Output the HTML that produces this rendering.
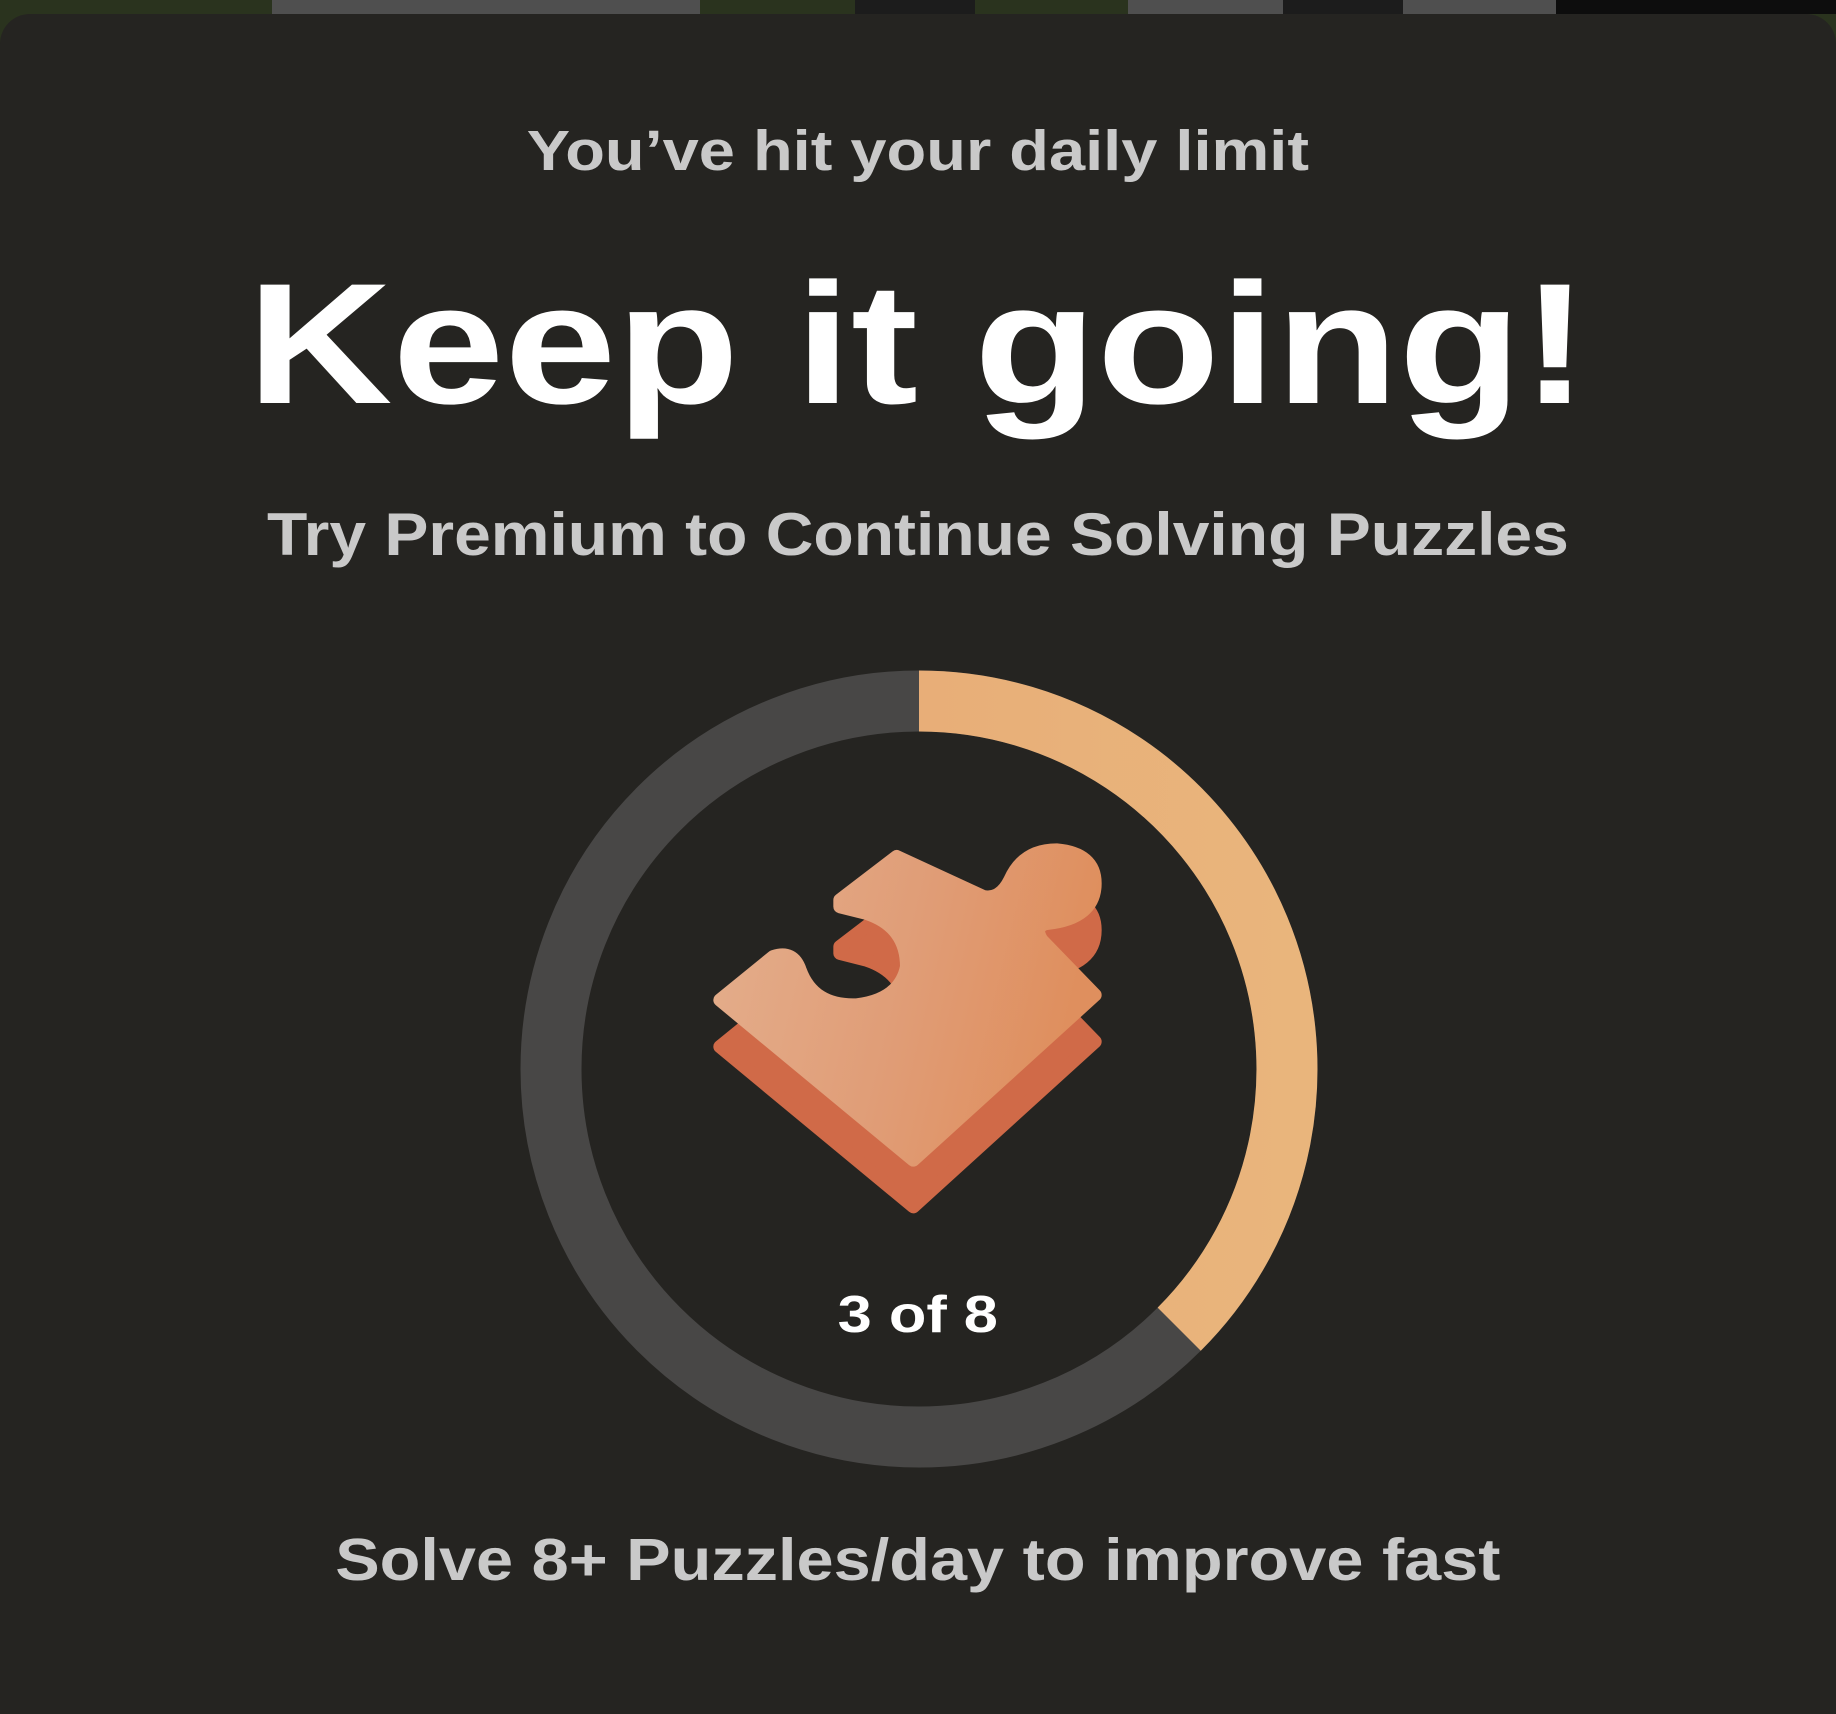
<!DOCTYPE html>
<html><head><meta charset="utf-8"><style>
html,body{margin:0;padding:0;width:1836px;height:1680px;overflow:hidden;background:#2a331e;font-family:"Liberation Sans",sans-serif;}
.strip{position:absolute;top:0;height:14px}
.card{position:absolute;left:0;top:14px;width:1836px;height:1700px;background:#252421;border-radius:30px 30px 0 0}
.t{position:absolute;left:0;width:1836px;text-align:center;font-weight:bold;white-space:nowrap;transform-origin:919px 50%}
</style></head><body>
<div class="strip" style="left:272px;width:428px;background:#4f4f4f"></div>
<div class="strip" style="left:855px;width:120px;background:#1c1c1c"></div>
<div class="strip" style="left:1128px;width:155px;background:#4f4f4f"></div>
<div class="strip" style="left:1283px;width:120px;background:#1c1c1c"></div>
<div class="strip" style="left:1403px;width:153px;background:#4f4f4f"></div>
<div class="strip" style="left:1556px;width:280px;background:#0d0d0d"></div>
<div class="card"></div>
<div class="t" style="top:118px;font-size:57px;color:#c9c9c9;transform:scaleX(1.14)">You’ve hit your daily limit</div>
<div class="t" style="top:245px;font-size:172px;color:#fff;font-weight:900;transform:scaleX(1.17)">Keep it going!</div>
<div class="t" style="top:500px;font-size:60px;color:#c9c9c9;transform:scaleX(1.1)">Try Premium to Continue Solving Puzzles</div>
<svg style="position:absolute;left:0;top:0" width="1836" height="1680">
<defs><linearGradient id="og" x1="0" y1="0" x2="1" y2="0"><stop offset="0" stop-color="#e8ae78"/><stop offset="1" stop-color="#e9b57c"/></linearGradient></defs>
<circle cx="919" cy="1069" r="368" fill="none" stroke="#484746" stroke-width="61"/>
<path d="M919 701 A368 368 0 0 1 1179.2 1329.2" fill="none" stroke="url(#og)" stroke-width="61"/>
</svg>
<svg style="position:absolute;left:680px;top:800px" width="450" height="450" viewBox="0 0 1350 1350">
<defs><linearGradient id="pg" x1="0" y1="0" x2="1" y2="0.2"><stop offset="0" stop-color="#e4ae8c"/><stop offset="0.55" stop-color="#e09d77"/><stop offset="1" stop-color="#df8f5e"/></linearGradient></defs>
<g stroke-linejoin="round" stroke-width="40">
<path transform="translate(0,140)" fill="#d06a48" stroke="#d06a48" d="M120,600 L280,470 Q340,450 360,510 Q400,620 530,615 Q660,600 680,500 Q680,380 560,340 L480,320 L480,300 L650,170 L910,290 Q960,300 990,240 Q1030,150 1130,150 Q1245,160 1245,250 Q1245,355 1100,370 Q1060,380 1085,420 L1245,585 L700,1080 Z"/>
<path fill="url(#pg)" stroke="url(#pg)" d="M120,600 L280,470 Q340,450 360,510 Q400,620 530,615 Q660,600 680,500 Q680,380 560,340 L480,320 L480,300 L650,170 L910,290 Q960,300 990,240 Q1030,150 1130,150 Q1245,160 1245,250 Q1245,355 1100,370 Q1060,380 1085,420 L1245,585 L700,1080 Z"/>
</g>
</svg>
<div class="t" style="top:1285px;font-size:52px;color:#fff;font-weight:900;transform:scaleX(1.18)">3 of 8</div>
<div class="t" style="top:1526px;font-size:59px;color:#c9c9c9;transform:scaleX(1.13)">Solve 8+ Puzzles/day to improve fast</div>
</body></html>
